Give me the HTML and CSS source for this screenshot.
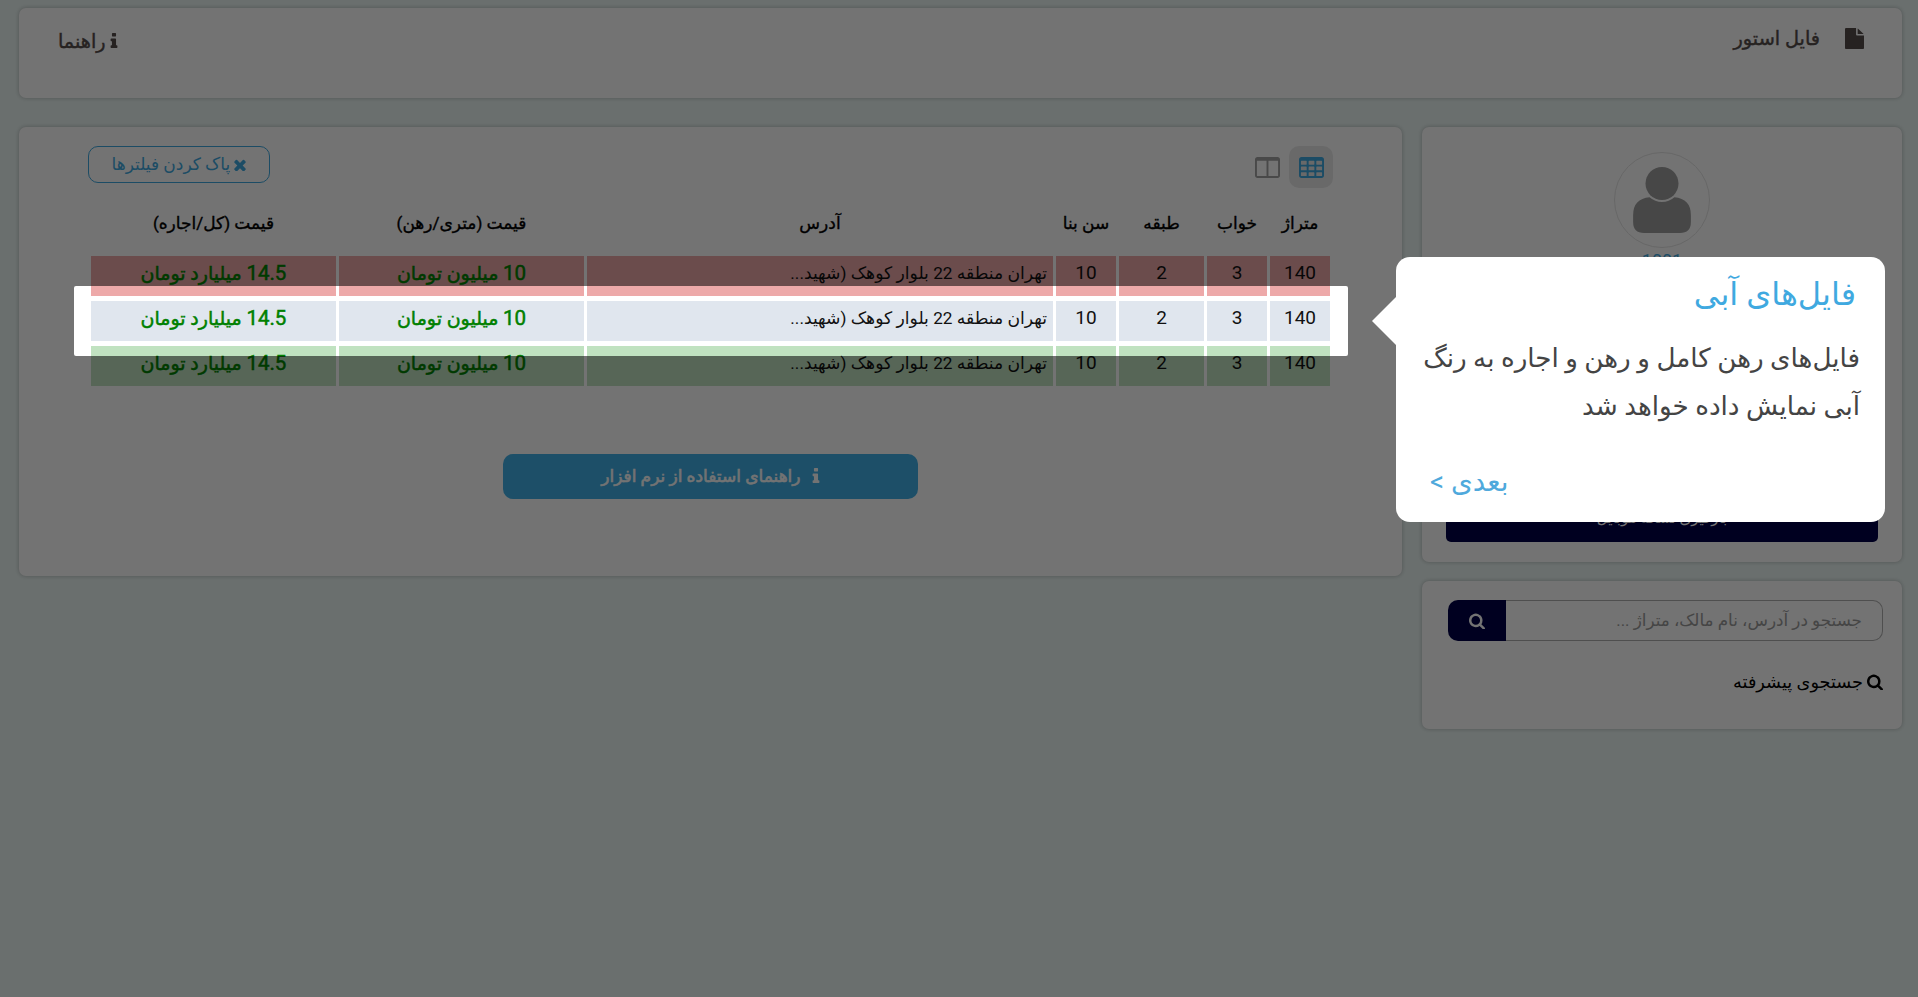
FILE: index.html
```html
<!DOCTYPE html>
<html lang="fa" dir="rtl">
<head>
<meta charset="UTF-8">
<title>فایل استور</title>
<link rel="stylesheet" href="styles.css">
</head>
<body>
<svg class="defs" xmlns="http://www.w3.org/2000/svg">
	<symbol id="i-search" viewBox="64 64 1664 1664"><path d="M1216 832q0-185-131.5-316.5t-316.5-131.5-316.5 131.5-131.5 316.5 131.5 316.5 316.5 131.5 316.5-131.5 131.5-316.5zm512 832q0 52-38 90t-90 38q-54 0-90-38l-343-342q-179 124-399 124-143 0-273.5-55.5t-225-150-150-225-55.5-273.5 55.5-273.5 150-225 225-150 273.5-55.5 273.5 55.5 225 150 150 225 55.5 273.5q0 220-124 399l343 343q37 37 37 90z"/></symbol>
	<symbol id="i-times" viewBox="280 280 1232 1232"><path d="M1490 1322q0 40-28 68l-136 136q-28 28-68 28t-68-28l-294-294-294 294q-28 28-68 28t-68-28l-136-136q-28-28-28-68t28-68l294-294-294-294q-28-28-28-68t28-68l136-136q28-28 68-28t68 28l294 294 294-294q28-28 68-28t68 28l136 136q28 28 28 68t-28 68l-294 294 294 294q28 28 28 68z"/></symbol>
	<symbol id="i-info" viewBox="576 128 640 1408"><path d="M1216 1344v128q0 26-19 45t-45 19h-512q-26 0-45-19t-19-45v-128q0-26 19-45t45-19h64v-384h-64q-26 0-45-19t-19-45v-128q0-26 19-45t45-19h384q26 0 45 19t19 45v576h64q26 0 45 19t19 45zm-128-1152v192q0 26-19 45t-45 19h-256q-26 0-45-19t-19-45v-192q0-26 19-45t45-19h256q26 0 45 19t19 45z"/></symbol>
	<symbol id="i-file" viewBox="128 0 1536 1792" preserveAspectRatio="none"><path d="M1152 512v-472q22 14 36 28l408 408q14 14 28 36h-472zm-128 32q0 40 28 68t68 28h544v1056q0 40-28 68t-68 28h-1344q-40 0-68-28t-28-68v-1600q0-40 28-68t68-28h800v544z"/></symbol>
	<symbol id="i-table" viewBox="64 128 1664 1408" preserveAspectRatio="none"><path d="M576 1376v-192q0-14-9-23t-23-9h-320q-14 0-23 9t-9 23v192q0 14 9 23t23 9h320q14 0 23-9t9-23zm0-384v-192q0-14-9-23t-23-9h-320q-14 0-23 9t-9 23v192q0 14 9 23t23 9h320q14 0 23-9t9-23zm512 384v-192q0-14-9-23t-23-9h-320q-14 0-23 9t-9 23v192q0 14 9 23t23 9h320q14 0 23-9t9-23zm-512-768v-192q0-14-9-23t-23-9h-320q-14 0-23 9t-9 23v192q0 14 9 23t23 9h320q14 0 23-9t9-23zm512 384v-192q0-14-9-23t-23-9h-320q-14 0-23 9t-9 23v192q0 14 9 23t23 9h320q14 0 23-9t9-23zm512 384v-192q0-14-9-23t-23-9h-320q-14 0-23 9t-9 23v192q0 14 9 23t23 9h320q14 0 23-9t9-23zm-512-768v-192q0-14-9-23t-23-9h-320q-14 0-23 9t-9 23v192q0 14 9 23t23 9h320q14 0 23-9t9-23zm512 384v-192q0-14-9-23t-23-9h-320q-14 0-23 9t-9 23v192q0 14 9 23t23 9h320q14 0 23-9t9-23zm0-384v-192q0-14-9-23t-23-9h-320q-14 0-23 9t-9 23v192q0 14 9 23t23 9h320q14 0 23-9t9-23zm128-320v1088q0 66-47 113t-113 47h-1344q-66 0-113-47t-47-113v-1088q0-66 47-113t113-47h1344q66 0 113 47t47 113z"/></symbol>
	<symbol id="i-columns" viewBox="64 128 1664 1408" preserveAspectRatio="none"><path d="M224 1408h608v-1024h-640v992q0 13 9.5 22.5t22.5 9.5zm1376-32v-992h-640v1024h608q13 0 22.5-9.5t9.5-22.5zm128-1088v1088q0 66-47 113t-113 47h-1344q-66 0-113-47t-47-113v-1088q0-66 47-113t113-47h1344q66 0 113 47t47 113z"/></symbol>
</svg>

<div class="page">
	<header class="card topbar">
		<div class="brand">
			<svg class="brand-icon"><use href="#i-file"/></svg>
			<span>فایل استور</span>
		</div>
		<a class="help"><svg class="help-icon"><use href="#i-info"/></svg> راهنما</a>
	</header>

	<div class="columns">
		<aside class="side">
			<section class="card profile">
				<div class="avatar">
					<svg viewBox="0 0 84 96" width="58" height="66" class="avatar-icon">
						<circle cx="42" cy="24" r="24"/>
						<path d="M24 44A27 27 0 0 0 60 44Q84 46 84 70V80Q84 96 68 96H16Q0 96 0 80V70Q0 46 24 44Z"/>
					</svg>
				</div>
				<div class="profile-code">1001</div>
				<a class="btn-navy">بارگیری نسخه موبایل</a>
			</section>
			<section class="card search">
				<div class="search-box">
					<input class="search-input" type="text" placeholder="جستجو در آدرس، نام مالک، متراژ ...">
					<button class="search-btn"><svg class="search-btn-icon"><use href="#i-search"/></svg></button>
				</div>
				<a class="adv-search"><svg class="adv-icon"><use href="#i-search"/></svg> جستجوی پیشرفته</a>
			</section>
		</aside>

		<main class="card files">
			<div class="toolbar">
				<div class="views">
					<span class="view active"><svg class="view-icon"><use href="#i-table"/></svg></span>
					<span class="view"><svg class="view-icon"><use href="#i-columns"/></svg></span>
				</div>
				<a class="clear"><svg class="clear-icon"><use href="#i-times"/></svg> پاک کردن فیلترها</a>
			</div>

			<table class="list">
				<colgroup>
					<col class="c-s"><col class="c-s"><col class="c-m"><col class="c-s"><col class="c-addr"><col class="c-p"><col class="c-p">
				</colgroup>
				<thead>
					<tr>
						<th>متراژ</th>
						<th>خواب</th>
						<th>طبقه</th>
						<th>سن بنا</th>
						<th>آدرس</th>
						<th>قیمت (متری/رهن)</th>
						<th>قیمت (کل/اجاره)</th>
					</tr>
				</thead>
				<tbody>
					<tr class="red">
						<td>140</td><td>3</td><td>2</td><td>10</td>
						<td class="addr">تهران منطقه 22 بلوار کوهک (شهید...</td>
						<td class="price"><span class="num">10</span> میلیون تومان</td>
						<td class="price"><span class="num">14.5</span> میلیارد تومان</td>
					</tr>
					<tr class="blue">
						<td>140</td><td>3</td><td>2</td><td>10</td>
						<td class="addr">تهران منطقه 22 بلوار کوهک (شهید...</td>
						<td class="price"><span class="num">10</span> میلیون تومان</td>
						<td class="price"><span class="num">14.5</span> میلیارد تومان</td>
					</tr>
					<tr class="green">
						<td>140</td><td>3</td><td>2</td><td>10</td>
						<td class="addr">تهران منطقه 22 بلوار کوهک (شهید...</td>
						<td class="price"><span class="num">10</span> میلیون تومان</td>
						<td class="price"><span class="num">14.5</span> میلیارد تومان</td>
					</tr>
				</tbody>
			</table>

			<a class="guide"><svg class="guide-icon"><use href="#i-info"/></svg> راهنمای استفاده از نرم افزار</a>
		</main>
	</div>
</div>

<!-- tour step on top of the page -->
<div class="spot"></div>
<div class="tip">
	<h3 class="tip-title">فایل‌های آبی</h3>
	<p class="tip-text">فایل‌های رهن کامل و رهن و اجاره به رنگ آبی نمایش داده خواهد شد</p>
	<a class="tip-next">بعدی &gt;</a>
</div>
</body>
</html>
```

FILE: styles.css
```css
* {
	box-sizing: border-box;
}
html, body {
	height: 100%;
}
body {
	margin: 0;
	background-color: #ebf6f4;
	font-family: Roboto, "DejaVu Sans", sans-serif;
	font-size: 15px;
	color: #222;
	overflow: hidden;
}
.defs {
	display: none;
}
svg {
	fill: currentColor;
}
.page {
	padding: 8px 16px 0 19px;
}
.card {
	background-color: #fff;
	border-radius: 7px;
	box-shadow: 0 0 4px rgba(0, 0, 0, .25);
}

/* top bar */
.topbar {
	height: 90px;
	margin-bottom: 29px;
	padding: 19px 38px 0 39px;
	display: flex;
	justify-content: space-between;
	align-items: flex-start;
}
.brand {
	display: flex;
	align-items: center;
	gap: 25px;
	font-size: 19.3px;
	color: #544c4a;
	-webkit-text-stroke: .4px #544c4a;
}
.brand-icon {
	width: 19px;
	height: 21px;
}
.help {
	font-size: 19.3px;
	color: #544c4a;
	-webkit-text-stroke: .4px #544c4a;
	padding-top: 3px;
}
.help-icon {
	width: 8px;
	height: 15px;
}

.columns {
	display: grid;
	grid-template-columns: 480px 1383px;
	column-gap: 20px;
	align-items: start;
}

/* right column */
.side {
	display: flex;
	flex-direction: column;
	gap: 19px;
}
.profile {
	height: 435px;
	padding: 25px 24px 20px 24px;
	display: flex;
	flex-direction: column;
	align-items: center;
}
.avatar {
	width: 96px;
	height: 96px;
	border: 1px solid #e4e4e4;
	border-radius: 50%;
	display: flex;
	align-items: center;
	justify-content: center;
}
.avatar-icon {
	color: #9e9e9e;
}
.profile-code {
	color: #3fa9e0;
	font-size: 18px;
	line-height: 21px;
	margin-top: 2px;
}
.btn-navy {
	margin-top: auto;
	width: 100%;
	height: 44px;
	background-color: #000047;
	color: #fff;
	border-radius: 5px;
	text-align: center;
	line-height: 40px;
	font-size: 15px;
}
.search {
	height: 148px;
	padding: 19px 19px 0 26px;
}
.search-box {
	display: flex;
	height: 41px;
}
.search-input {
	flex: 1;
	min-width: 0;
	border: 1px solid #b0b0b0;
	border-left: 0;
	border-radius: 0 10px 10px 0;
	padding: 0 20px 2px 20px;
	font-family: Roboto, "DejaVu Sans", sans-serif;
	font-size: 16.8px;
	background: #fff;
}
.search-input::placeholder {
	color: #9a9a9a;
}
.search-btn {
	width: 58px;
	border: 0;
	border-radius: 10px 0 0 10px;
	background-color: #000047;
	color: #fff;
	display: flex;
	align-items: center;
	justify-content: center;
	padding: 0;
}
.search-btn-icon {
	width: 16px;
	height: 16px;
}
.adv-search {
	display: flex;
	align-items: center;
	gap: 4px;
	margin-top: 31px;
	font-size: 17.7px;
	color: #000;
}
.adv-icon {
	width: 16px;
	height: 16px;
}

/* file list */
.files {
	height: 449px;
	padding: 19px 69px 0 69px;
}
.toolbar {
	display: flex;
	justify-content: space-between;
	align-items: flex-start;
	height: 46px;
}
.views {
	display: flex;
}
.view {
	width: 44px;
	height: 42px;
	border-radius: 10px;
	display: flex;
	align-items: center;
	justify-content: center;
	color: #a2a2a2;
}
.view.active {
	background-color: #e9e9e9;
	color: #3fa9e0;
}
.view-icon {
	width: 25px;
	height: 21px;
}
.clear {
	width: 182px;
	height: 37px;
	border: 1px solid #3fa9e0;
	border-radius: 10px;
	color: #3fa9e0;
	font-size: 17px;
	line-height: 34px;
	text-align: center;
}
.clear-icon {
	width: 12px;
	height: 12px;
	vertical-align: -1px;
}
.list {
	width: 1245px;
	table-layout: fixed;
	border-collapse: separate;
	border-spacing: 3px 5px;
}
.c-s { width: 60px; }
.c-m { width: 85px; }
.c-addr { width: 466px; }
.c-p { width: 245px; }
.list th {
	height: 54px;
	font-size: 17px;
	font-weight: normal;
	color: #000;
	-webkit-text-stroke: .35px #000;
	padding: 0 0 2px 0;
	text-align: center;
}
.list td {
	height: 40px;
	padding: 0 0 7px 0;
	text-align: center;
	font-size: 19px;
	color: #111;
}
.list .addr {
	text-align: right;
	padding-right: 6px;
	font-size: 17.2px;
}
.list .price {
	color: #008000;
	font-size: 19px;
	-webkit-text-stroke: .5px #008000;
}
.num {
	font-size: 20.5px;
}
.red td { background-color: #eda9a9; }
.blue td { background-color: #e0e6ee; }
.green td { background-color: #c0e2c0; }

.guide {
	display: block;
	width: 415px;
	height: 45px;
	margin: 63px 415px 0 0;
	background-color: #40b0e6;
	border-radius: 10px;
	color: #fff;
	-webkit-text-stroke: .6px #fff;
	font-size: 17px;
	text-align: center;
	line-height: 44px;
}
.guide-icon {
	width: 8px;
	height: 15px;
	margin-left: 7px;
	vertical-align: -1px;
}

/* spotlight and tooltip */
.spot {
	position: absolute;
	left: 74px;
	top: 286px;
	width: 1274px;
	height: 70px;
	border-radius: 2px;
	box-shadow: 0 0 0 3000px rgba(0, 0, 0, .55);
}
.tip {
	position: absolute;
	left: 1396px;
	top: 257px;
	width: 489px;
	height: 265px;
	padding: 17px 25px 0 25px;
	background-color: #fff;
	border-radius: 14px;
	color: #444;
}
.tip::before {
	content: "";
	position: absolute;
	right: 100%;
	top: 40px;
	border-style: solid;
	border-width: 24px 24px 24px 0;
	border-color: transparent #fff transparent transparent;
}
.tip-title {
	margin: 0;
	padding-right: 4px;
	font-size: 32px;
	line-height: 40px;
	font-weight: normal;
	color: #3fa9e0;
}
.tip-text {
	margin: 20px 0 0 0;
	font-size: 26.2px;
	line-height: 48px;
}
.tip-next {
	position: absolute;
	left: 34px;
	bottom: 16px;
	font-size: 27.8px;
	line-height: 48px;
	color: #4fa9dc;
}
```
